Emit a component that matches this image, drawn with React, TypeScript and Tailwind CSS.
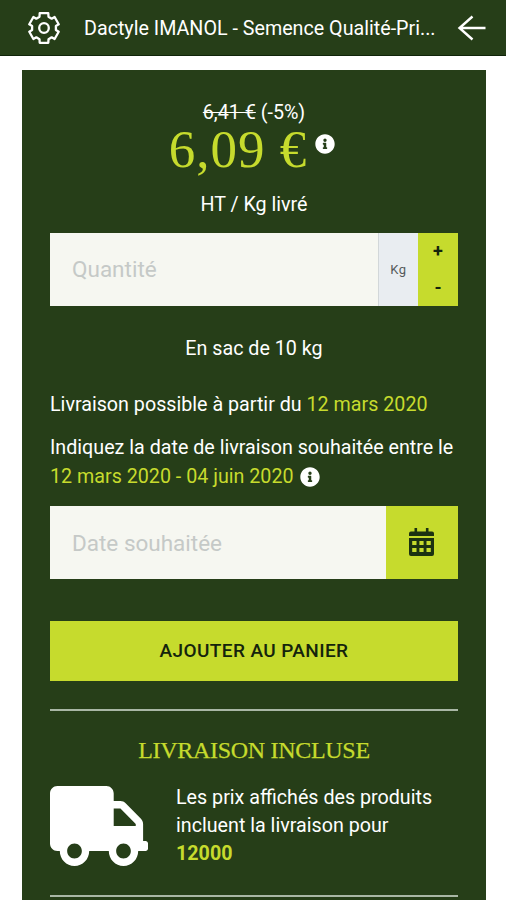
import type { ReactNode } from "react";
import { FaInfoCircle } from "react-icons/fa";

const GearIcon = () => (
  <svg
    viewBox="-16 -17 32 34"
    className="h-[34px] w-8 shrink-0"
    fill="none"
    stroke="currentColor"
    strokeWidth="2.3"
    strokeLinejoin="round"
  >
    <path d="M-4.300-14.800H4.300L4.500-11.300 7.700-9.300 10.600-11 14.700-3.700 11.900-2V2l2.800 1.700L10.600 11 7.700 9.300 4.500 11.300 4.300 14.800H-4.300L-4.500 11.300-7.700 9.300-10.600 11-14.700 3.700-11.900 2V-2L-14.700-3.700-10.600-11-7.700-9.300-4.500-11.300Z" />
    <circle r="4.800" />
  </svg>
);

const ArrowIcon = () => (
  <svg
    viewBox="0 0 30 26"
    className="h-[26px] w-[30px] shrink-0"
    fill="none"
    stroke="currentColor"
    strokeWidth="2.4"
  >
    <path d="M28.500 13H2.500M15.500 1.500 2.500 13l13 11.500" />
  </svg>
);

const CalendarIcon = () => (
  <svg viewBox="0 0 25 28" className="h-7 w-[25px]" fill="currentColor">
    <path d="M5.500 0h2.600v3.500h8.800V0h2.600v3.500H23a2 2 0 0 1 2 2V8H0V5.500a2 2 0 0 1 2-2h3.500z" />
    <path
      fillRule="evenodd"
      d="M0 10h25v16a2 2 0 0 1-2 2H2a2 2 0 0 1-2-2zM3.200 13v4h4.300v-4zM10.400 13v4h4.200v-4zM17.500 13v4h4.300v-4zM3.200 20v4h4.300v-4zM10.400 20v4h4.200v-4zM17.500 20v4h4.300v-4z"
    />
  </svg>
);

const TruckIcon = () => (
  <svg
    viewBox="0 0 640 512"
    preserveAspectRatio="none"
    className="mt-0.5 h-20 w-[98px] shrink-0"
    fill="currentColor"
  >
    <path d="M624 352h-16V243.900c0-12.700-5.100-24.900-14.100-33.900L494 110.100c-9-9-21.200-14.100-33.900-14.100H416V48c0-26.500-21.500-48-48-48H48C21.500 0 0 21.500 0 48v320c0 26.500 21.500 48 48 48h16c0 53 43 96 96 96s96-43 96-96h128c0 53 43 96 96 96s96-43 96-96h48c8.800 0 16-7.200 16-16v-32c0-8.800-7.200-16-16-16zM160 464c-26.500 0-48-21.500-48-48s21.500-48 48-48 48 21.500 48 48-21.500 48-48 48zm320 0c-26.500 0-48-21.500-48-48s21.500-48 48-48 48 21.500 48 48-21.500 48-48 48zm80-208H416V144h44.100l99.900 99.900V256z" />
  </svg>
);

const Accent = ({ children }: { children: ReactNode }) => (
  <span className="text-[#c6db2d]">{children}</span>
);

const App = () => {
  return (
    <div className="h-[900px] w-full overflow-hidden bg-white font-['Roboto',sans-serif] text-white">
      {/* Top bar */}
      <header className="flex h-14 items-center border-b border-[#10240a] bg-[#263e18] pr-[19px] pl-7">
        <GearIcon />
        <h1 className="mt-[3px] ml-6 text-[19.700px] leading-7 whitespace-nowrap">
          Dactyle IMANOL - Semence Qualité-Pri...
        </h1>
        <div className="ml-auto">
          <ArrowIcon />
        </div>
      </header>

      <main className="mt-[14px] mr-5 ml-[22px] h-[830px] bg-[#263e18] pt-[29px] pr-7 pl-7 text-[19.700px] leading-7">
        {/* Price */}
        <div className="text-center">
          <p>
            <s>6,41 €</s> (-5%)
          </p>
          <div className="flex h-[52px] items-start justify-center gap-2">
            <span className="-mt-1 -ml-1 font-['Liberation_Serif',serif] text-[53px] leading-[52px] tracking-[1px] text-[#c6db2d]">
              6,09 €
            </span>
            <FaInfoCircle className="mt-[7px] h-5 w-5" />
          </div>
          <p className="mt-3">HT / Kg livré</p>
        </div>

        {/* Quantity */}
        <div className="mt-[14px] flex h-[73px]">
          <input
            placeholder="Quantité"
            className="min-w-0 flex-1 bg-[#f6f7f1] px-[22px] pb-0.5 text-[22.500px] text-gray-700 outline-none placeholder:text-[#c5c9c7]"
          />
          <span className="flex w-10 items-center justify-center border-l border-[#d2d7d9] bg-[#e9edf1] text-[13px] tracking-[0.5px] text-[#555b5c]">
            Kg
          </span>
          <div className="flex w-10 flex-col bg-[#c6db2d] text-[18px] font-bold text-[#14240c]">
            <button className="flex-1">+</button>
            <button className="flex-1">-</button>
          </div>
        </div>
        <p className="mt-[29px] text-center">En sac de 10 kg</p>

        {/* Delivery date */}
        <p className="mt-7">
          Livraison possible à partir du <Accent>12 mars 2020</Accent>
        </p>
        <p className="mt-[14px] leading-[29px] whitespace-nowrap">
          Indiquez la date de livraison souhaitée entre le
          <br />
          <Accent>12 mars 2020 - 04 juin 2020</Accent>
          <FaInfoCircle className="ml-1.5 inline h-5 w-5 align-[-4px]" />
        </p>
        <div className="mt-[15px] flex h-[73px]">
          <input
            placeholder="Date souhaitée"
            className="min-w-0 flex-1 bg-[#f6f7f1] px-[22px] text-[22.500px] text-gray-700 outline-none placeholder:text-[#c5c9c7]"
          />
          <button className="flex w-[72px] items-center justify-center bg-[#c6db2d] pr-0.5 pb-0.5 text-[#1c3211]">
            <CalendarIcon />
          </button>
        </div>

        <button className="mt-[42px] h-[60px] w-full bg-[#c6db2d] text-[19px] font-medium tracking-[0.4px] text-[#14240c]">
          AJOUTER AU PANIER
        </button>

        {/* Shipping */}
        <section className="mt-7 h-[188px] border-y-2 border-[#a9b7a5] pt-[25px]">
          <h2 className="text-center font-['Liberation_Serif',serif] text-[24px] leading-7 tracking-[-0.300px] text-[#c6db2d] [-webkit-text-stroke:0.25px_#c6db2d]">
            LIVRAISON INCLUSE
          </h2>
          <div className="mt-5 flex">
            <TruckIcon />
            <p className="ml-7 whitespace-nowrap">
              Les prix affichés des produits
              <br />
              incluent la livraison pour
              <br />
              <b className="text-[#c6db2d]">12000</b>
            </p>
          </div>
        </section>
      </main>
    </div>
  );
};

export default App;
